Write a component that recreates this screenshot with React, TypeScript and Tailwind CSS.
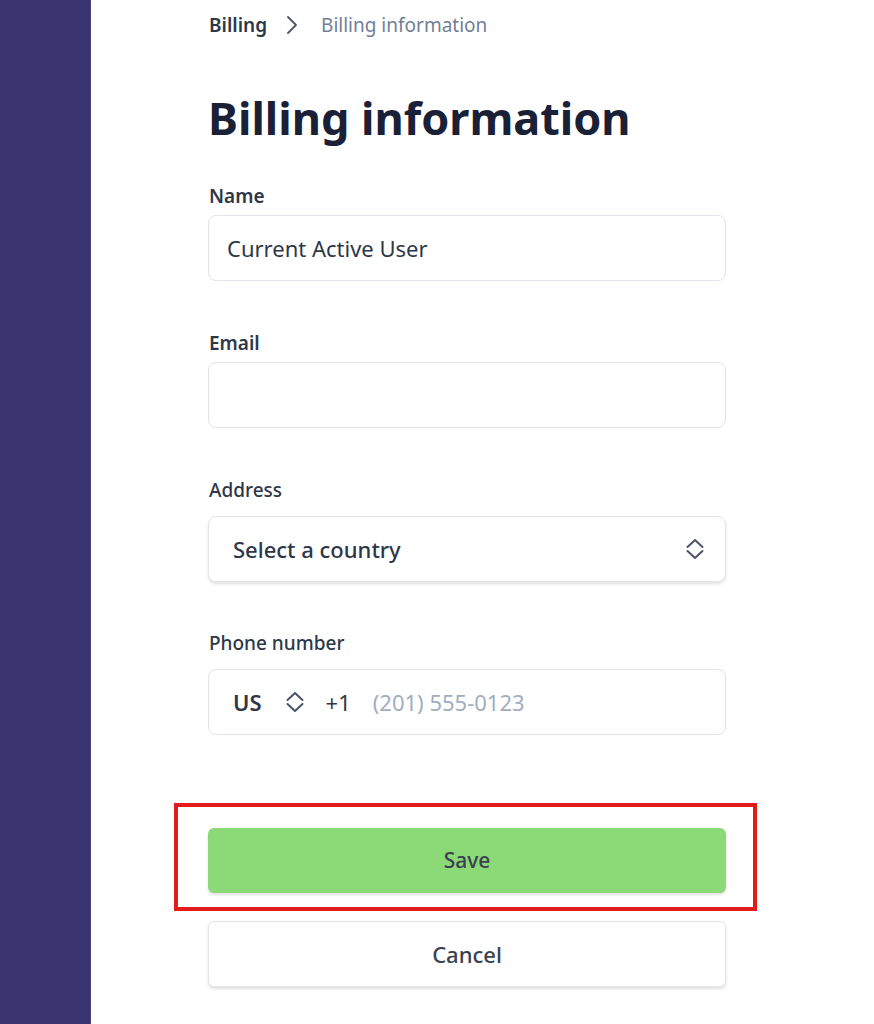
function Label({ children, weight = "font-semibold" }: { children: React.ReactNode; weight?: string }) {
  return <label className={`block pl-px text-[19px] leading-6 text-[#2d3748] ${weight}`}>{children}</label>;
}

function UpDown({ className = "" }: { className?: string }) {
  return (
    <svg viewBox="0 0 24 24" className={`h-6 w-6 ${className}`} fill="none" stroke="currentColor" strokeWidth={2} strokeLinecap="round" strokeLinejoin="round">
      <path d="M4.5 10L12 3L19.5 10" />
      <path d="M4.5 14L12 21L19.5 14" />
    </svg>
  );
}

export default function App() {
  return (
    <div className="flex min-h-[1024px] bg-white font-['Noto_Sans',sans-serif]">
      <aside className="w-[91px] shrink-0 border-r border-[#4b4683] bg-[#39336f]" />
      <main className="w-[635px] pl-[117px]">
        <nav className="flex h-[50px] items-center pl-px text-[19px]">
          <span className="font-semibold text-[#2d3748]">Billing</span>
          <svg viewBox="0 0 12 20" className="ml-[19px] mr-[23px] h-5 w-3 text-[#4a5568]" fill="none" stroke="currentColor" strokeWidth={1.8} strokeLinecap="round" strokeLinejoin="round">
            <path d="M2 2L10 10L2 18" />
          </svg>
          <span className="text-[#718096]">Billing information</span>
        </nav>

        <h1 className="mt-[40px] text-[45px] font-bold leading-[56px] text-[#1a2036]">
          Billing information
        </h1>

        <div className="mt-[38px]">
          <Label>Name</Label>
          <div className="mt-[7px] flex h-[66px] items-center rounded-lg border border-[#dfe3ea] px-[18px] text-[22px] text-[#2d3748]">
            Current Active User
          </div>
        </div>

        <div className="mt-[50px]">
          <Label>Email</Label>
          <div className="mt-[7px] h-[66px] rounded-lg border border-[#dfe3ea]" />
        </div>

        <div className="mt-[50px]">
          <Label weight="font-medium">Address</Label>
          <div className="mt-[14px] flex h-[66px] items-center justify-between rounded-lg border border-[#e2e5ea] pl-6 pr-[18px] shadow-[0_2px_3px_rgba(0,0,0,0.12)]">
            <span className="text-[22px] font-medium text-[#2d3748]">Select a country</span>
            <UpDown className="text-[#4a5568]" />
          </div>
        </div>

        <div className="mt-[49px]">
          <Label weight="font-medium">Phone number</Label>
          <div className="mt-[14px] flex h-[66px] items-center rounded-lg border border-[#dfe3ea] pl-6 text-[22px]">
            <span className="font-semibold text-[#2d3748]">US</span>
            <UpDown className="ml-[21px] text-[#4a5568]" />
            <span className="ml-[19px] text-[#2d3748]">+1</span>
            <span className="ml-[22px] text-[#a0aec0]">(201) 555-0123</span>
          </div>
        </div>

        <div className="relative mt-[93px]">
          <button className="flex h-[65px] w-full items-center justify-center rounded-md bg-[#8cd977] text-[21px] font-medium text-[#3a4150] shadow-[0_2px_3px_rgba(0,0,0,0.12)]">
            Save
          </button>
          <div className="pointer-events-none absolute -top-[25px] -right-[31px] -bottom-[18px] -left-[34px] border-4 border-[#e31b1b]" />
        </div>

        <button className="mt-[28px] flex h-[66px] w-full items-center justify-center rounded-md border border-[#e2e5ea] bg-white text-[22px] font-medium text-[#3a4150] shadow-[0_2px_3px_rgba(0,0,0,0.12)]">
          Cancel
        </button>
      </main>
    </div>
  );
}
